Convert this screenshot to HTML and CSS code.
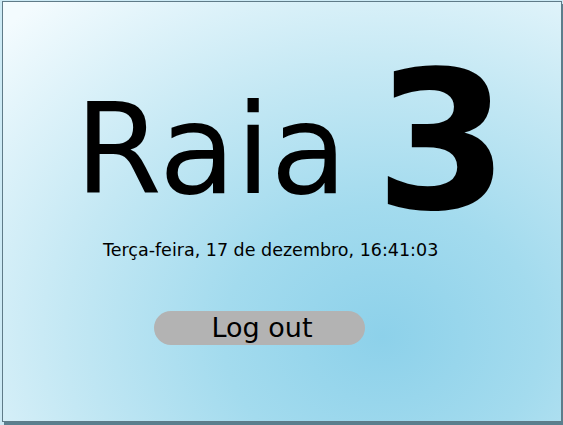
FILE: index.html
```html
<!DOCTYPE html>
<html>
<head>
<meta charset="utf-8">
<link rel="stylesheet" href="styles.css">
</head>
<body>
<div class="panel">
  <div class="title">
    <span class="word">Raia</span>
    <span class="num">3</span>
  </div>
  <div class="date">Terça-feira, 17 de dezembro, 16:41:03</div>
  <button class="logout">Log out</button>
</div>
</body>
</html>
```
FILE: styles.css
```css
html, body {
  margin: 0;
  padding: 0;
}
body {
  width: 563px;
  height: 425px;
  overflow: hidden;
  background: #cdeaf5;
  font-family: "DejaVu Sans", sans-serif;
}
.panel {
  box-sizing: border-box;
  margin: 1px 0 0 2px;
  width: 560px;
  height: 421px;
  border: 1px solid #5f7b88;
  box-shadow: 2px 3px 0 #5a7f8e;
  background: radial-gradient(ellipse 95% 105% at 68% 80%, #8dd1ea 0%, #a3dbee 30%, #c4e8f4 60%, #f3fbfe 100%);
  display: flex;
  flex-direction: column;
  align-items: flex-start;
}
.title {
  display: flex;
  align-items: baseline;
  margin: 73px 0 0 72px;
  color: #000;
}
.word {
  font-size: 125px;
  line-height: 150px;
}
.num {
  font-size: 192px;
  font-weight: bold;
  line-height: 100px;
  margin-left: 28px;
  transform: translateY(15px);
}
.date {
  font-size: 17.5px;
  margin: 15px 0 0 100px;
  color: #000;
}
.logout {
  margin: 51px 0 0 151px;
  width: 211px;
  height: 34px;
  border: none;
  border-radius: 17px;
  background: #b3b3b3;
  font-family: "DejaVu Sans", sans-serif;
  font-size: 27px;
  color: #000;
  padding: 0 0 0 5px;
  line-height: 34px;
}
```
